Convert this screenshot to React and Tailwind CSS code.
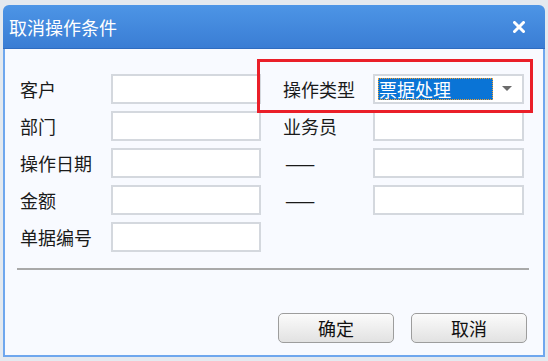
import React from 'react';

const font = { fontFamily: '"Noto Sans CJK SC", "Noto Sans", sans-serif' };

const Field = ({ children }) => (
  <div className="h-[30px] border-2 border-[#d4d8de] bg-white">{children}</div>
);

const Label = ({ children }) => (
  <div className="h-[30px] flex items-center text-[18px] leading-none text-[#1a1a1a]">{children}</div>
);

const App = () => {
  return (
    <div className="w-[548px] h-[361px] bg-[#e4e9ef] pt-[5px] px-[3px] overflow-hidden" style={font}>
      <div className="relative w-[542px]">
        <div className="h-[44px] rounded-t-[6px] bg-gradient-to-b from-[#4d95e6] to-[#3a7dd4] flex items-center justify-between pl-[6px] pr-[20px] border-b border-[#2f6cc0]">
          <span className="text-white text-[18px] leading-none">取消操作条件</span>
          <svg width="12" height="12" viewBox="0 0 12 12">
            <path d="M1.5 1.5 L10.5 10.5 M10.5 1.5 L1.5 10.5" stroke="white" strokeWidth="3" strokeLinecap="round" />
          </svg>
        </div>
        <div className="h-[308px] bg-[#f8faff] border-x-2 border-b-2 border-[#6fa7ee] pt-[25px] pl-[15px] pr-[16px]">
          <div className="grid grid-cols-[91px_150px_22px_90px_151px] grid-rows-[30px_30px_30px_30px_30px] gap-y-[7px]">
            <Label>客户</Label>
            <Field />
            <div />
            <Label>操作类型</Label>
            <div className="h-[30px] border-2 border-[#d4d8de] bg-white flex items-center pl-[3px] pr-[10px]">
              <div className="h-[22px] w-[115px] bg-[#0a74d6] border border-dotted border-[#f0a030] text-white text-[18px] leading-none flex items-center">
                票据处理
              </div>
              <svg className="ml-auto" width="10" height="6" viewBox="0 0 10 6">
                <path d="M0 0 L10 0 L5 5 Z" fill="#6b6b6b" />
              </svg>
            </div>

            <Label>部门</Label>
            <Field />
            <div />
            <Label>业务员</Label>
            <Field />

            <Label>操作日期</Label>
            <Field />
            <div />
            <Label><span className="pl-[2px]">——</span></Label>
            <Field />

            <Label>金额</Label>
            <Field />
            <div />
            <Label><span className="pl-[2px]">——</span></Label>
            <Field />

            <Label>单据编号</Label>
            <Field />
          </div>

          <div className="mt-[16px] ml-[-3px] mr-[-2px] h-[2px] bg-[#a9a9a9]" />

          <div className="mt-[43px] flex justify-end gap-[17px]">
            <button className="w-[116px] h-[30px] rounded-[5px] border border-[#9d9d9d] bg-gradient-to-b from-[#fbfbfb] to-[#e2e2e2] text-[18px] leading-none text-[#111]">
              确定
            </button>
            <button className="w-[116px] h-[30px] rounded-[5px] border border-[#9d9d9d] bg-gradient-to-b from-[#fbfbfb] to-[#e2e2e2] text-[18px] leading-none text-[#111]">
              取消
            </button>
          </div>
        </div>
        <div className="absolute left-[254px] top-[54px] w-[276px] h-[54px] border-[3px] border-[#ea1f29]" />
      </div>
    </div>
  );
};

export default App;
